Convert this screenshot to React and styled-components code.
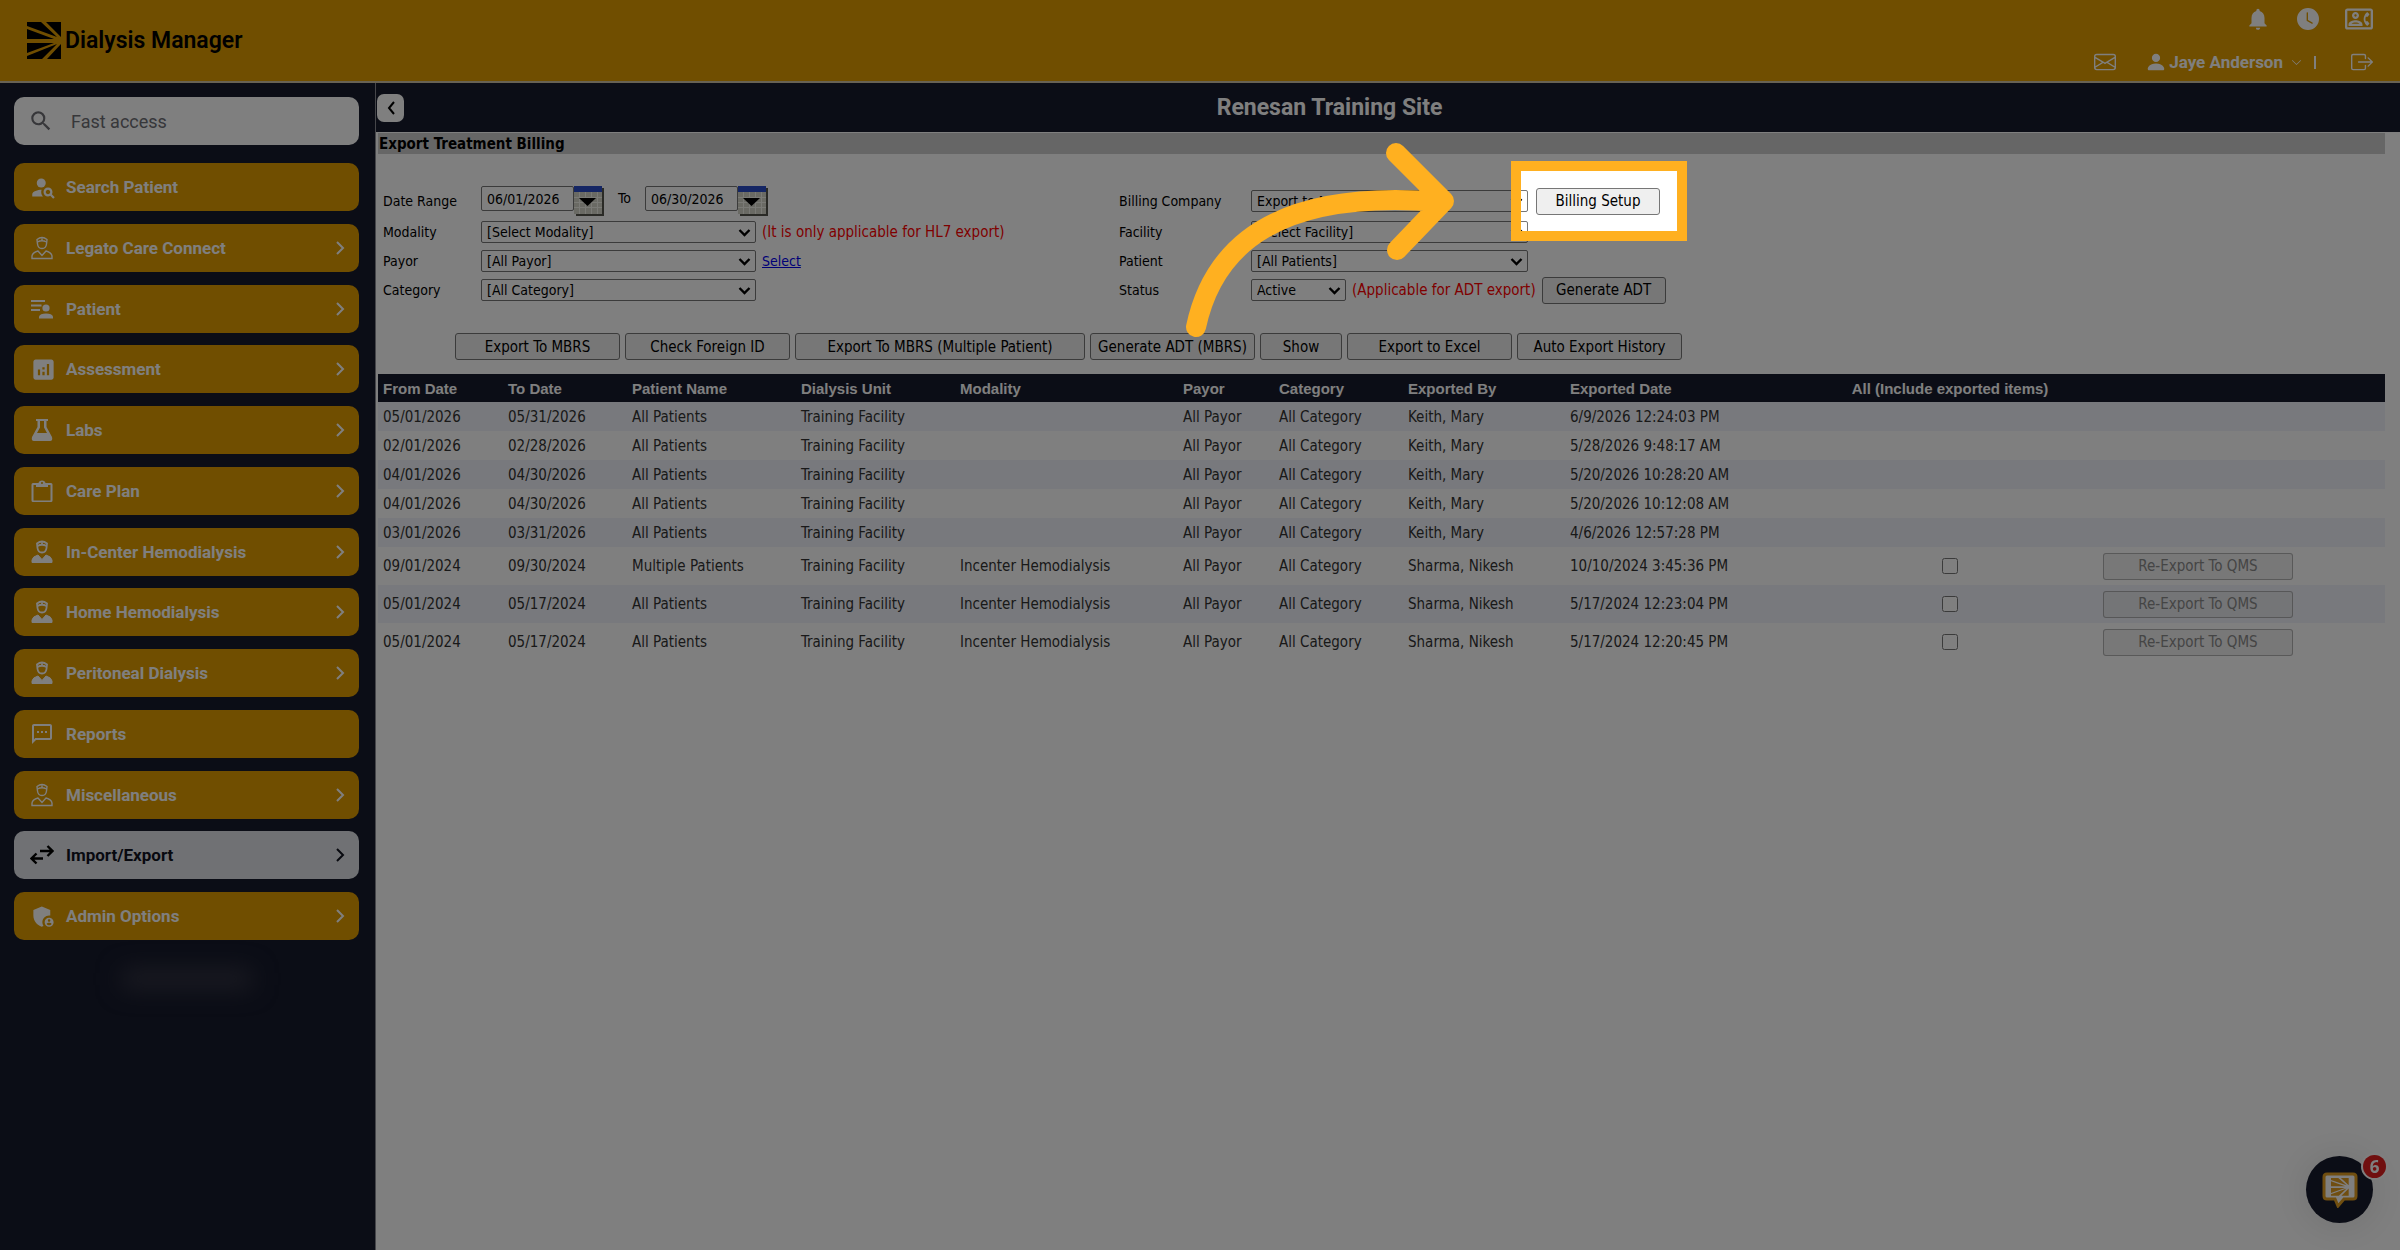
import styled, { createGlobalStyle, css } from "styled-components";
import {
  MdAdminPanelSettings,
  MdAnalytics,
  MdNotifications,
  MdOutlineContactPhone,
  MdOutlineSms,
  MdPersonSearch,
  MdSearch,
} from "react-icons/md";
import {
  BsBoxArrowRight,
  BsChevronDown,
  BsClockFill,
  BsEnvelope,
  BsPersonFill,
} from "react-icons/bs";

const GlobalStyle = createGlobalStyle`
  * {
    box-sizing: border-box;
  }
  body {
    margin: 0;
    background: #ffffff;
    color: #000000;
    font-family: "DejaVu Sans Condensed", "DejaVu Sans", sans-serif;
    font-size: 14px;
  }
  button, input, select {
    font-family: inherit;
    font-size: inherit;
  }
`;

const Page = styled.div`
  display: flex;
  flex-direction: column;
  min-height: 100vh;
  overflow: hidden;
`;

/* ---------- header ---------- */

const Header = styled.header`
  display: flex;
  justify-content: space-between;
  height: 83px;
  padding: 0 27px;
  background: #e09c00;
  border-bottom: 2px solid #d0c4a8;
  font-family: Roboto, sans-serif;
`;

const Brand = styled.a`
  display: flex;
  align-items: center;
  gap: 4px;
  color: #000000;
  font-size: 23px;
  font-weight: 600;
  text-decoration: none;
`;

const HeaderTools = styled.div`
  display: flex;
  flex-direction: column;
  align-items: flex-end;
  justify-content: space-between;
  padding: 6px 0 6px;
  color: #ffffff;
`;

const ToolRow = styled.div`
  display: flex;
  align-items: center;
  gap: ${(props) => props.$gap}px;
  height: 26px;
`;

const IconButton = styled.button`
  display: flex;
  padding: 0;
  border: none;
  background: none;
  color: inherit;
  cursor: pointer;
`;

const UserButton = styled(IconButton)`
  align-items: center;
  gap: 2px;
  margin-left: 29px;
  font-size: 17px;
  font-weight: 700;

  span {
    margin-right: 6px;
  }
`;

const Divider = styled.span`
  width: 2px;
  height: 13px;
  margin: 0 35px 0 12px;
  background: #ffffff;
`;

/* ---------- sidebar ---------- */

const Body = styled.div`
  display: flex;
  flex: 1;
`;

const Sidebar = styled.aside`
  display: flex;
  flex-direction: column;
  width: 376px;
  padding: 14px 16px 20px 14px;
  background: #161a2c;
  border-right: 1px solid #8c8c94;
  font-family: Roboto, sans-serif;
`;

const SearchBox = styled.label`
  display: flex;
  align-items: center;
  gap: 15px;
  height: 48px;
  padding: 0 14px;
  border-radius: 10px;
  background: #ffffff;
  color: #6e6e74;
`;

const SearchInput = styled.input`
  flex: 1;
  min-width: 0;
  border: none;
  outline: none;
  background: none;
  font-size: 18px;

  &::placeholder {
    color: #6e6e74;
  }
`;

const Nav = styled.nav`
  display: flex;
  flex-direction: column;
  justify-content: space-between;
  height: 777px;
  margin-top: 18px;
`;

const NavItem = styled.button`
  display: flex;
  align-items: center;
  height: 48px;
  padding: 0 10px 0 16px;
  border: none;
  border-radius: 10px;
  background: ${(props) => (props.$active ? "#e0e3e8" : "#e09c00")};
  color: ${(props) => (props.$active ? "#10121f" : "#ffffff")};
  font-size: 17px;
  font-weight: 700;
  text-align: left;
  cursor: pointer;
`;

const NavIcon = styled.span`
  display: flex;
  width: 36px;
`;

const NavLabel = styled.span`
  flex: 1;
`;

const Redacted = styled.div`
  align-self: center;
  width: 130px;
  height: 18px;
  margin-top: 30px;
  background: #3a3a48;
  filter: blur(12px);
`;

/* ---------- main ---------- */

const Main = styled.main`
  flex: 1;
  min-width: 0;
`;

const SiteBar = styled.div`
  display: flex;
  align-items: center;
  height: 49px;
  padding-left: 1px;
  background: #161a2c;
`;

const BackButton = styled.button`
  display: flex;
  align-items: center;
  justify-content: center;
  width: 27px;
  height: 28px;
  padding: 0;
  border: none;
  border-radius: 7px;
  background: #ffffff;
`;

const SiteName = styled.h1`
  flex: 1;
  margin: 0;
  padding-right: 145px;
  color: #ffffff;
  font-family: Roboto, sans-serif;
  font-size: 23px;
  font-weight: 700;
  text-align: center;
`;

const Content = styled.div`
  padding: 1px 15px 0 2px;
`;

const PageTitle = styled.h2`
  margin: 0;
  padding: 2px 0 0 1px;
  background: #cccccc;
  font-size: 15px;
  font-weight: 700;
  line-height: 19px;
`;

const Filters = styled.form`
  display: grid;
  grid-template-columns: 736px 1fr;
  padding: 32px 0 0 5px;
`;

const Fields = styled.div`
  display: grid;
  grid-template-columns: ${(props) => props.$label}px 1fr;
  grid-template-rows: 30px 31px 27px 32px;
  align-items: center;
`;

const Controls = styled.div`
  display: flex;
  align-items: center;
  gap: 6px;
`;

const DateControls = styled.div`
  display: flex;
  align-items: flex-start;
  align-self: start;
`;

const DateInput = styled.input`
  width: 93px;
  height: 25px;
  padding: 0 5px;
  border: 1px solid #767676;
  border-radius: 2px;
  background: #ffffff;
`;

const To = styled.span`
  padding: 0 14px;
  line-height: 25px;
`;

const SelectBox = styled.div`
  position: relative;
  width: ${(props) => props.$width}px;

  svg {
    position: absolute;
    top: 8px;
    right: 5px;
    pointer-events: none;
  }
`;

const Select = styled.select`
  display: block;
  width: 100%;
  height: 22px;
  padding: 0 20px 0 5px;
  border: 1px solid #767676;
  border-radius: 2px;
  background: #ffffff;
  color: #000000;
  appearance: none;
`;

const Note = styled.span`
  color: #ff0000;
  font-size: 15px;
`;

const PayorLink = styled.a`
  color: #0000ee;
`;

const buttonLook = css`
  height: 27px;
  padding: 0;
  border: 1px solid #767676;
  border-radius: 3px;
  background: #efefef;
  color: #000000;
`;

const Button = styled.button`
  ${buttonLook}
  width: ${(props) => props.$width}px;
  font-size: 15px;

  &:disabled {
    border-color: rgba(118, 118, 118, 0.5);
    background: rgba(225, 225, 225, 0.5);
    color: #8a8a8a;
  }
`;

const Actions = styled.div`
  display: flex;
  gap: 5px;
  padding: 27px 0 14px 77px;
`;

/* dims everything on the page but the button it wraps */
const Spotlight = styled.div`
  position: relative;
  z-index: 10;
  margin-left: 2px;

  &::after {
    content: "";
    position: absolute;
    inset: -27px -27px -26px -25px;
    border: 10px solid #ffb020;
    box-shadow: 0 0 0 4000px rgba(0, 0, 0, 0.5);
    pointer-events: none;
  }
`;

const ArrowArt = styled.svg`
  position: absolute;
  z-index: 1;
  right: 100%;
  top: -57px;
  margin-right: 76px;
  pointer-events: none;
`;

/* ---------- table ---------- */

const Table = styled.table`
  width: 100%;
  border-collapse: collapse;
  table-layout: fixed;
`;

const Th = styled.th`
  height: 28px;
  padding: 0 5px;
  background: #161a2c;
  color: #ffffff;
  font-family: "Liberation Sans", Arial, sans-serif;
  font-size: 15px;
  font-weight: 700;
  text-align: ${(props) => props.$align || "left"};
  white-space: nowrap;
`;

const Tr = styled.tr`
  height: ${(props) => (props.$tall ? 38 : 29)}px;
  background: #ffffff;
  color: #333333;

  &:nth-child(odd) {
    background: #f0f2fa;
  }
`;

const Td = styled.td`
  padding: 0 5px;
  font-size: 15px;
  text-align: ${(props) => props.$align || "left"};
  white-space: nowrap;
`;

const Checkbox = styled.input`
  display: block;
  width: 16px;
  height: 16px;
  margin: 0 auto;
`;

/* ---------- chat launcher ---------- */

const Chat = styled.button`
  position: fixed;
  right: 27px;
  bottom: 27px;
  display: flex;
  align-items: center;
  justify-content: center;
  width: 67px;
  height: 67px;
  padding: 0;
  border: none;
  border-radius: 50%;
  background: #161a2c;
  box-shadow: 0 2px 40px rgba(0, 0, 0, 0.12);
`;

const Badge = styled.span`
  position: absolute;
  top: -1px;
  right: -13px;
  width: 23px;
  border-radius: 50%;
  background: #e01e1e;
  box-shadow: 0 0 0 2px #ffffff;
  color: #ffffff;
  font-family: "Open Sans", sans-serif;
  font-size: 17px;
  font-weight: 700;
  line-height: 23px;
`;

/* ---------- drawings ---------- */

const rays =
  "M0 0H14L30 15L0 4ZM19 0H34V15ZM0 7L27 17H0ZM0 21H27L0 31ZM0 34L30 22L15 37H0ZM34 22V37H20Z";

const LogoMark = () => (
  <svg width="34" height="37" viewBox="0 0 34 37" aria-hidden="true">
    <path d={rays} />
  </svg>
);

const Nurse = ({ filled }) => (
  <svg width="24" height="24" viewBox="0 0 24 24" fill="none" stroke="currentColor" strokeWidth={filled ? 1.8 : 1.4} aria-hidden="true">
    <path d="M7 3.5Q12 -.5 17 3.5L16.500 8Q16 12.500 12 12.500T7.500 8Z" />
    <path d="M7.500 6Q12 3.500 16.500 6M12 2.200V5" />
    <path
      d="M2 22.500V20Q2.500 16.500 8 15L12 19.500L16 15Q21.500 16.500 22 20V22.500Z"
      fill={filled ? "currentColor" : "none"}
      strokeWidth={filled ? 1 : 1.4}
    />
  </svg>
);

const PatientList = () => (
  <svg width="24" height="24" viewBox="0 0 24 24" fill="currentColor" aria-hidden="true">
    <path d="M1 3H15V5H1ZM1 7.500H11.500V9.500H1ZM1 12H10V14H1Z" />
    <circle cx="16" cy="11" r="3.600" />
    <path d="M9 21.500V19.500Q10 16.500 16 16.500T23 19.500V21.500Z" />
  </svg>
);

const Flask = () => (
  <svg width="24" height="24" viewBox="0 0 24 24" fill="currentColor" aria-hidden="true">
    <path
      fillRule="evenodd"
      d="M6 1H18V3H16.500V9L22 19Q23 23 20 23H4Q1 23 2 19L7.500 9V3H6ZM10 3V9.500L7 15H17L14 9.500V3Z"
    />
  </svg>
);

const Clipboard = () => (
  <svg width="24" height="24" viewBox="0 0 24 24" fill="currentColor" aria-hidden="true">
    <path
      fillRule="evenodd"
      d="M3 4H8.500Q9 1.500 12 1.500T15.500 4H21Q22.500 4 22.500 5.500V21.500Q22.500 23 21 23H3Q1.500 23 1.500 21.500V5.500Q1.500 4 3 4ZM3.500 6V21.500H20.500V6H18V8H6V6ZM12 3A1 1 0 1 0 12 5A1 1 0 1 0 12 3Z"
    />
  </svg>
);

const Swap = () => (
  <svg width="24" height="24" viewBox="0 0 24 24" fill="none" stroke="#000000" strokeWidth="2.400" aria-hidden="true">
    <path d="M10 8H22M17.500 3L22.500 8L17.500 13M13 15.500H1.500M6.500 10.500L1.500 15.500L6.500 20.500" />
  </svg>
);

const ChevronRight = () => (
  <svg width="18" height="18" viewBox="0 0 18 18" fill="none" stroke="currentColor" strokeWidth="2" aria-hidden="true">
    <path d="M6 3L12 9L6 15" />
  </svg>
);

const BackChevron = () => (
  <svg width="14" height="16" viewBox="0 0 14 16" fill="none" stroke="#000000" strokeWidth="2" aria-hidden="true">
    <path d="M10 2L5 8L10 14" />
  </svg>
);

const SelectArrow = () => (
  <svg width="13" height="8" viewBox="0 0 13 8" fill="none" stroke="#000000" strokeWidth="2.400" aria-hidden="true">
    <path d="M1.500 1L6.500 6L11.500 1" />
  </svg>
);

const Calendar = () => (
  <svg width="30" height="30" viewBox="0 0 30 30" aria-hidden="true">
    <path fill="#55554d" d="M2 2H30V30H2Z" />
    <path fill="#d4d4c8" d="M0 0H28V28H0Z" />
    <path stroke="#f4f4ec" strokeWidth="1" d="M0 11.500H28M0 16.500H28M0 21.500H28M5.500 6V28M11.500 6V28M17.500 6V28M23.500 6V28" />
    <path fill="#2a4cc8" d="M0 0H28V6H0Z" />
    <path fill="#000000" d="M5 12H22L13.500 20Z" />
  </svg>
);

const Arrow = () => (
  <ArrowArt width="292" height="220" viewBox="1168 130 292 220" aria-hidden="true">
    <path
      d="M1196 326C1214 242 1280 188 1440 201M1396 152L1444 200L1397 249"
      fill="none"
      stroke="#ffb020"
      strokeWidth="20"
      strokeLinecap="round"
      strokeLinejoin="round"
    />
  </ArrowArt>
);

const ChatLogo = () => (
  <svg width="36" height="36" viewBox="0 0 36 36" aria-hidden="true">
    <path
      d="M5 2H31Q34 2 34 5V24Q34 27 31 27H22L16 34L13 27H5Q2 27 2 24V5Q2 2 5 2Z"
      fill="#ffffff"
      stroke="#e09c20"
      strokeWidth="3"
    />
    <g transform="translate(9 6) scale(.52 .48)" fill="#e09c20">
      <path d={rays} />
    </g>
  </svg>
);

/* ---------- data ---------- */

const navItems = [
  { label: "Search Patient", icon: <MdPersonSearch size={27} />, leaf: true },
  { label: "Legato Care Connect", icon: <Nurse /> },
  { label: "Patient", icon: <PatientList /> },
  { label: "Assessment", icon: <MdAnalytics size={27} /> },
  { label: "Labs", icon: <Flask /> },
  { label: "Care Plan", icon: <Clipboard /> },
  { label: "In-Center Hemodialysis", icon: <Nurse filled /> },
  { label: "Home Hemodialysis", icon: <Nurse filled /> },
  { label: "Peritoneal Dialysis", icon: <Nurse filled /> },
  { label: "Reports", icon: <MdOutlineSms size={24} />, leaf: true },
  { label: "Miscellaneous", icon: <Nurse /> },
  { label: "Import/Export", icon: <Swap />, active: true },
  { label: "Admin Options", icon: <MdAdminPanelSettings size={27} /> },
];

const actions = [
  ["Export To MBRS", 165],
  ["Check Foreign ID", 165],
  ["Export To MBRS (Multiple Patient)", 290],
  ["Generate ADT (MBRS)", 165],
  ["Show", 82],
  ["Export to Excel", 165],
  ["Auto Export History", 165],
];

const columns = [
  ["From Date", 125],
  ["To Date", 124],
  ["Patient Name", 169],
  ["Dialysis Unit", 159],
  ["Modality", 223],
  ["Payor", 96],
  ["Category", 129],
  ["Exported By", 162],
  ["Exported Date", 237],
  ["All (Include exported items)", 296],
];

const exportsList = [
  ["05/01/2026", "05/31/2026", "All Patients", "", "Keith, Mary", "6/9/2026 12:24:03 PM"],
  ["02/01/2026", "02/28/2026", "All Patients", "", "Keith, Mary", "5/28/2026 9:48:17 AM"],
  ["04/01/2026", "04/30/2026", "All Patients", "", "Keith, Mary", "5/20/2026 10:28:20 AM"],
  ["04/01/2026", "04/30/2026", "All Patients", "", "Keith, Mary", "5/20/2026 10:12:08 AM"],
  ["03/01/2026", "03/31/2026", "All Patients", "", "Keith, Mary", "4/6/2026 12:57:28 PM"],
  ["09/01/2024", "09/30/2024", "Multiple Patients", "Incenter Hemodialysis", "Sharma, Nikesh", "10/10/2024 3:45:36 PM"],
  ["05/01/2024", "05/17/2024", "All Patients", "Incenter Hemodialysis", "Sharma, Nikesh", "5/17/2024 12:23:04 PM"],
  ["05/01/2024", "05/17/2024", "All Patients", "Incenter Hemodialysis", "Sharma, Nikesh", "5/17/2024 12:20:45 PM"],
];

const Dropdown = ({ id, value, width = 277 }) => (
  <SelectBox $width={width}>
    <Select id={id}>
      <option>{value}</option>
    </Select>
    <SelectArrow />
  </SelectBox>
);

const TopHeader = () => (
  <Header>
    <Brand href="#home">
      <LogoMark />
      Dialysis Manager
    </Brand>
    <HeaderTools>
      <ToolRow $gap={26}>
        <IconButton aria-label="Notifications">
          <MdNotifications size={26} />
        </IconButton>
        <IconButton aria-label="Recent">
          <BsClockFill size={22} />
        </IconButton>
        <IconButton aria-label="Contacts">
          <MdOutlineContactPhone size={28} />
        </IconButton>
      </ToolRow>
      <ToolRow $gap={0}>
        <IconButton aria-label="Messages">
          <BsEnvelope size={22} />
        </IconButton>
        <UserButton>
          <BsPersonFill size={22} />
          <span>Jaye Anderson</span>
          <BsChevronDown size={11} />
        </UserButton>
        <Divider />
        <IconButton aria-label="Log out">
          <BsBoxArrowRight size={22} />
        </IconButton>
      </ToolRow>
    </HeaderTools>
  </Header>
);

const SideMenu = () => (
  <Sidebar>
    <SearchBox>
      <MdSearch size={26} />
      <SearchInput type="text" placeholder="Fast access" aria-label="Fast access" />
    </SearchBox>
    <Nav>
      {navItems.map((item) => (
        <NavItem key={item.label} $active={item.active}>
          <NavIcon>{item.icon}</NavIcon>
          <NavLabel>{item.label}</NavLabel>
          {!item.leaf && <ChevronRight />}
        </NavItem>
      ))}
    </Nav>
    <Redacted />
  </Sidebar>
);

const BillingFilters = () => (
  <Filters onSubmit={(e) => e.preventDefault()}>
    <Fields $label={98}>
      <label htmlFor="from">Date Range</label>
      <DateControls>
        <DateInput id="from" type="text" defaultValue="06/01/2026" />
        <IconButton type="button" aria-label="Pick start date">
          <Calendar />
        </IconButton>
        <To>To</To>
        <DateInput type="text" aria-label="To" defaultValue="06/30/2026" />
        <IconButton type="button" aria-label="Pick end date">
          <Calendar />
        </IconButton>
      </DateControls>
      <label htmlFor="modality">Modality</label>
      <Controls>
        <Dropdown id="modality" value="[Select Modality]" width={275} />
        <Note>(It is only applicable for HL7 export)</Note>
      </Controls>
      <label htmlFor="payor">Payor</label>
      <Controls>
        <Dropdown id="payor" value="[All Payor]" width={275} />
        <PayorLink href="#payor">Select</PayorLink>
      </Controls>
      <label htmlFor="category">Category</label>
      <Controls>
        <Dropdown id="category" value="[All Category]" width={275} />
      </Controls>
    </Fields>
    <Fields $label={132}>
      <label htmlFor="company">Billing Company</label>
      <Controls>
        <Dropdown id="company" value="Export to MBRS" />
        <Spotlight>
          <Button type="button" $width={124}>Billing Setup</Button>
          <Arrow />
        </Spotlight>
      </Controls>
      <label htmlFor="facility">Facility</label>
      <Controls>
        <Dropdown id="facility" value="[Select Facility]" />
      </Controls>
      <label htmlFor="patient">Patient</label>
      <Controls>
        <Dropdown id="patient" value="[All Patients]" />
      </Controls>
      <label htmlFor="status">Status</label>
      <Controls>
        <Dropdown id="status" value="Active" width={95} />
        <Note>(Applicable for ADT export)</Note>
        <Button type="button" $width={124}>Generate ADT</Button>
      </Controls>
    </Fields>
  </Filters>
);

const ExportTable = () => (
  <Table>
    <colgroup>
      {columns.map(([label, width]) => (
        <col key={label} style={{ width }} />
      ))}
      <col />
    </colgroup>
    <thead>
      <tr>
        {columns.map(([label], i) => (
          <Th key={label} $align={i === 9 ? "center" : "left"}>{label}</Th>
        ))}
        <Th aria-label="Re-export" />
      </tr>
    </thead>
    <tbody>
      {exportsList.map(([from, to, patient, modality, by, date]) => (
        <Tr key={date} $tall={modality !== ""}>
          <Td>{from}</Td>
          <Td>{to}</Td>
          <Td>{patient}</Td>
          <Td>Training Facility</Td>
          <Td>{modality}</Td>
          <Td>All Payor</Td>
          <Td>All Category</Td>
          <Td>{by}</Td>
          <Td>{date}</Td>
          <Td>{modality && <Checkbox type="checkbox" aria-label={`Include items of ${date}`} />}</Td>
          <Td>{modality && <Button $width={190} disabled>Re-Export To QMS</Button>}</Td>
        </Tr>
      ))}
    </tbody>
  </Table>
);

const App = () => {
  return (
    <Page>
      <GlobalStyle />
      <TopHeader />
      <Body>
        <SideMenu />
        <Main>
          <SiteBar>
            <BackButton aria-label="Back">
              <BackChevron />
            </BackButton>
            <SiteName>Renesan Training Site</SiteName>
          </SiteBar>
          <Content>
            <PageTitle>Export Treatment Billing</PageTitle>
            <BillingFilters />
            <Actions>
              {actions.map(([label, width]) => (
                <Button key={label} $width={width}>{label}</Button>
              ))}
            </Actions>
            <ExportTable />
          </Content>
        </Main>
      </Body>
      <Chat aria-label="Open chat">
        <ChatLogo />
        <Badge>6</Badge>
      </Chat>
    </Page>
  );
};

export default App;
